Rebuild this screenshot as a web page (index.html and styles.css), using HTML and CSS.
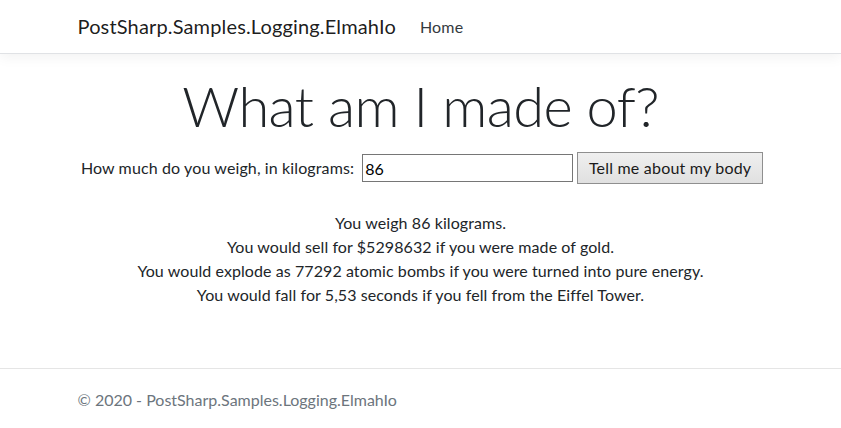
FILE: index.html
```html
<!DOCTYPE html>
<html lang="en">
<head>
<meta charset="utf-8">
<title>PostSharp.Samples.Logging.ElmahIo</title>
<link rel="stylesheet" href="styles.css">
</head>
<body>
<header class="navbar">
  <div class="container nav-inner">
    <a class="brand" href="#">PostSharp.Samples.Logging.ElmahIo</a>
    <a class="nav-link" href="#">Home</a>
  </div>
</header>
<main class="container main">
  <h1 class="display">What am I made of?</h1>
  <form class="weigh-form">
    <label class="weigh-label" for="w">How much do you weigh, in kilograms:</label>
    <input class="weigh-input" id="w" type="text" value="86">
    <button class="weigh-btn" type="button">Tell me about my body</button>
  </form>
  <div class="results">
    <div>You weigh 86 kilograms.</div>
    <div>You would sell for $5298632 if you were made of gold.</div>
    <div>You would explode as 77292 atomic bombs if you were turned into pure energy.</div>
    <div>You would fall for 5,53 seconds if you fell from the Eiffel Tower.</div>
  </div>
</main>
<footer class="footer">
  <div class="container">&copy; 2020 - PostSharp.Samples.Logging.ElmahIo</div>
</footer>
</body>
</html>
```
FILE: styles.css
```css
html, body { height: 100%; }
body {
  margin: 0;
  font-family: Lato, "Liberation Sans", sans-serif;
  font-size: 16px;
  line-height: 1.5;
  color: #212529;
  background: #fff;
  display: flex;
  flex-direction: column;
}
.container {
  box-sizing: border-box;
  width: 720px;
  margin: 0 auto;
  padding: 0 15px;
}
.navbar {
  height: 53px;
  border-bottom: 1px solid #e0e2e5;
  box-shadow: 0 4px 12px rgba(0,0,0,.05);
  background: #fff;
  display: flex;
  align-items: center;
  flex: none;
}
.nav-inner {
  display: flex;
  align-items: center;
}
.brand {
  font-size: 20px;
  line-height: 30px;
  color: rgba(0,0,0,.9);
  text-decoration: none;
  margin-left: 2px;
  margin-right: 16px;
  margin-top: -1px;
  letter-spacing: 0.15px;
}
.nav-link {
  padding: 0 8px;
  color: #343a40;
  text-decoration: none;
  font-size: 16px;
  letter-spacing: 0.2px;
}
.main {
  flex: 1 0 auto;
  padding-top: 16px;
  text-align: center;
}
.display {
  margin: 0 0 8px;
  font-size: 56px;
  font-weight: 300;
  line-height: 1.2;
  letter-spacing: -0.6px;
  padding-top: 2px;
}
.weigh-form {
  margin: 13px 0 0;
  display: flex;
  justify-content: center;
  align-items: center;
  padding-left: 3px;
}
.weigh-label {
  margin-right: 8px;
  letter-spacing: 0.12px;
}
.weigh-input {
  box-sizing: border-box;
  width: 211px;
  height: 28px;
  margin: 0 4px 0 0;
  padding: 1px 2px;
  border: 1px solid #767676;
  border-radius: 0;
  font: inherit;
  font-size: 16px;
  color: #000;
  outline: none;
}
.weigh-btn {
  box-sizing: border-box;
  width: 186px;
  height: 32px;
  margin: 0;
  padding: 0 8px;
  border: 1px solid #8f8f8f;
  border-radius: 0;
  background: linear-gradient(#efefef, #e0e0e0);
  font: inherit;
  font-size: 16px;
  color: #1a1a1a;
  letter-spacing: 0.2px;
}
.results {
  margin-top: 27px;
  line-height: 24px;
  letter-spacing: 0.08px;
}
.footer {
  flex: none;
  border-top: 1px solid #e5e5e5;
  line-height: 57px;
  padding-top: 2px;
  color: #6c757d;
  white-space: nowrap;
}
.footer .container { padding-left: 17px; }
```
